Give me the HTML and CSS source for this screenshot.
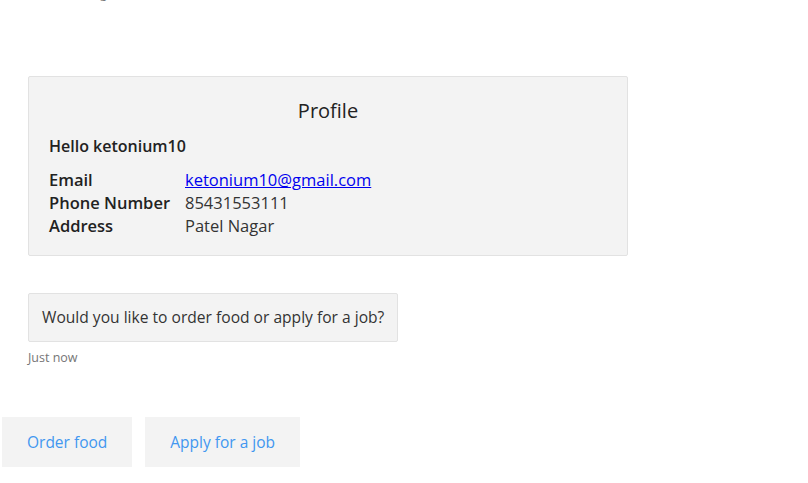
FILE: index.html
```html
<!DOCTYPE html>
<html>
<head>
<meta charset="utf-8">
<link rel="stylesheet" href="styles.css">
</head>
<body>
<div class="page">
  <div class="prev-time">Now awaiting</div>
  <div class="chat">
    <div class="card">
      <h2 class="card-title">Profile</h2>
      <div class="hello">Hello ketonium10</div>
      <div class="facts">
        <div class="label">Email</div>
        <div class="value"><a href="#" class="mail">ketonium10@gmail.com</a></div>
        <div class="label">Phone Number</div>
        <div class="value">85431553111</div>
        <div class="label">Address</div>
        <div class="value">Patel Nagar</div>
      </div>
    </div>
    <div class="message">
      <div class="bubble">Would you like to order food or apply for a job?</div>
      <div class="time">Just now</div>
    </div>
  </div>
  <div class="actions">
    <button class="action">Order food</button>
    <button class="action">Apply for a job</button>
  </div>
</div>
</body>
</html>
```
FILE: styles.css
```css
* { box-sizing: border-box; }
html, body { margin: 0; padding: 0; background: #fff; }
body {
  font-family: "Open Sans", "Noto Sans", sans-serif;
  color: #333;
  width: 808px;
  height: 483px;
  overflow: hidden;
}
.page { display: flex; flex-direction: column; }
.prev-time {
  font-size: 12.5px;
  color: #767676;
  margin: -14px 0 0 28px;
  height: 16px;
  line-height: 16px;
}
.chat {
  padding: 74px 0 0 28px;
  display: flex;
  flex-direction: column;
}
.card {
  width: 600px;
  height: 180px;
  background: #f3f3f3;
  border: 1px solid #e2e2e2;
  border-radius: 2px;
  padding: 21px 20px 0 20px;
}
.card-title {
  margin: 0;
  text-align: center;
  font-size: 20px;
  font-weight: 400;
  line-height: 26px;
  color: #222;
}
.hello {
  margin-top: 11px;
  font-size: 16px;
  font-weight: 600;
  line-height: 22px;
  color: #222;
}
.facts {
  margin-top: 11px;
  display: grid;
  grid-template-columns: 136px auto;
  font-size: 16.5px;
  line-height: 23px;
}
.label { font-weight: 600; color: #222; }
.value { color: #333; }
.mail { color: #0000ee; text-decoration: underline; }
.message { margin-top: 37px; }
.bubble {
  display: inline-block;
  background: #f3f3f3;
  border: 1px solid #e2e2e2;
  border-radius: 2px;
  padding: 0 13px;
  height: 49px;
  line-height: 47px;
  font-size: 15.6px;
  color: #333;
}
.time {
  margin-top: 8px;
  font-size: 12.5px;
  line-height: 16px;
  color: #767676;
}
.actions {
  display: flex;
  gap: 13px;
  padding: 51px 0 0 2px;
}
.action {
  font-family: inherit;
  font-size: 15.5px;
  color: #4197f0;
  background: #f3f3f3;
  border: none;
  border-radius: 0;
  height: 50px;
  padding: 0 25px;
  cursor: pointer;
}
```
